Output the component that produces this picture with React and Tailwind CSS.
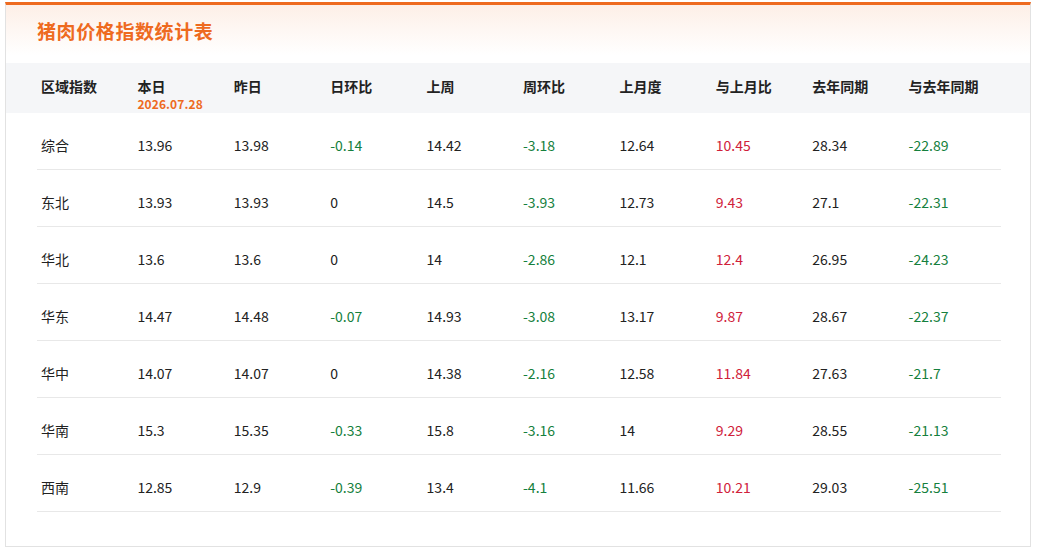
import React from 'react';

const headers = ['区域指数', '本日', '昨日', '日环比', '上周', '周环比', '上月度', '与上月比', '去年同期', '与去年同期'];

const rows = [
  ['综合', '13.96', '13.98', '-0.14', '14.42', '-3.18', '12.64', '10.45', '28.34', '-22.89'],
  ['东北', '13.93', '13.93', '0', '14.5', '-3.93', '12.73', '9.43', '27.1', '-22.31'],
  ['华北', '13.6', '13.6', '0', '14', '-2.86', '12.1', '12.4', '26.95', '-24.23'],
  ['华东', '14.47', '14.48', '-0.07', '14.93', '-3.08', '13.17', '9.87', '28.67', '-22.37'],
  ['华中', '14.07', '14.07', '0', '14.38', '-2.16', '12.58', '11.84', '27.63', '-21.7'],
  ['华南', '15.3', '15.35', '-0.33', '15.8', '-3.16', '14', '9.29', '28.55', '-21.13'],
  ['西南', '12.85', '12.9', '-0.39', '13.4', '-4.1', '11.66', '10.21', '29.03', '-25.51'],
];

// colour a change value: negative green, positive red, zero plain
const changeColor = (v) => {
  const n = parseFloat(v);
  if (n < 0) return 'text-[#15803d]';
  if (n > 0) return 'text-[#d0213a]';
  return 'text-[#222]';
};

const changeCols = [3, 5, 7, 9];

const App = () => {
  return (
    <div
      className="w-[1037px] h-[553px] bg-white pt-[2px] pl-[5px]"
      style={{ fontFamily: '"Noto Sans CJK SC", "Noto Sans", sans-serif' }}
    >
      <div className="w-[1026px] h-[545px] border border-[#e2e2e2] border-t-[3px] border-t-[#ee6a1f]">
        {/* Title */}
        <div className="h-[50px] bg-gradient-to-b from-[#fdefe7] to-white pl-[31px] flex items-center">
          <h1 className="text-[19px] font-bold text-[#ee6a1f] leading-none tracking-[0.6px]">猪肉价格指数统计表</h1>
        </div>

        {/* Table header */}
        <div className="mt-[8px] h-[50px] bg-[#f5f6f8] px-[31px]">
          <div className="grid grid-cols-10 w-[964px] h-full">
            {headers.map((h, i) => (
              <div key={h} className="pl-[4px] pt-[14px]">
                <div className="text-[14px] font-bold text-[#222] leading-[18px]">{h}</div>
                {i === 1 && (
                  <div className="mt-[2px] text-[12px] font-bold text-[#ee6a1f] leading-[13px] tracking-[0.1px]">2026.07.28</div>
                )}
              </div>
            ))}
          </div>
        </div>

        {/* Rows */}
        <div className="px-[31px]">
          {rows.map((r) => (
            <div key={r[0]} className="grid grid-cols-10 w-[964px] h-[57px] border-b border-[#e8e8e8]">
              {r.map((c, i) => (
                <div
                  key={i}
                  className={`pl-[4px] pt-[23px] text-[14px] leading-[18px] ${
                    changeCols.includes(i) ? changeColor(c) : 'text-[#222]'
                  }`}
                >
                  {c}
                </div>
              ))}
            </div>
          ))}
        </div>
      </div>
    </div>
  );
};

export default App;
